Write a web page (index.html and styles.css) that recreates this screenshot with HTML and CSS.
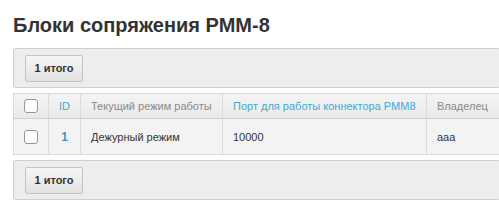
FILE: index.html
```html
<!DOCTYPE html>
<html>
<head>
<meta charset="utf-8">
<link rel="stylesheet" href="styles.css">
</head>
<body>
<div class="page">
  <h1 class="title">Блоки сопряжения РММ-8</h1>
  <div class="toolbar"><span class="btn">1 итого</span></div>
  <table class="grid">
    <colgroup>
      <col class="c-check"><col class="c-id"><col class="c-mode"><col class="c-port"><col class="c-owner">
    </colgroup>
    <thead>
      <tr>
        <th class="cell-check"><span class="checkbox"></span></th>
        <th class="link center">ID</th>
        <th>Текущий режим работы</th>
        <th class="link">Порт для работы коннектора РММ8</th>
        <th>Владелец</th>
      </tr>
    </thead>
    <tbody>
      <tr>
        <td class="cell-check"><span class="checkbox"></span></td>
        <td class="id center">1</td>
        <td>Дежурный режим</td>
        <td>10000</td>
        <td>aaa</td>
      </tr>
    </tbody>
  </table>
  <div class="toolbar"><span class="btn">1 итого</span></div>
</div>
</body>
</html>
```

FILE: styles.css
```css
html, body {
  margin: 0;
  padding: 0;
  background: #fff;
}
body {
  font-family: "Liberation Sans", Arial, sans-serif;
  color: #333;
  overflow: hidden;
}
.page {
  padding: 0 0 0 13px;
  width: 488px;
}
.title {
  margin: 0;
  padding-top: 14px;
  height: 48px;
  box-sizing: border-box;
  font-size: 20px;
  line-height: 23px;
  font-weight: bold;
  color: #333;
}
.toolbar {
  box-sizing: border-box;
  height: 40px;
  border: 1px solid #cfcfcf;
  border-radius: 3px;
  background: #ededed;
  padding: 6px 0 0 11px;
}
.btn {
  display: inline-block;
  box-sizing: border-box;
  width: 58px;
  height: 27px;
  line-height: 25px;
  text-align: center;
  border: 1px solid #c4c4c4;
  border-radius: 2px;
  background: linear-gradient(#f6f6f6, #e2e2e2);
  font-size: 11px;
  font-weight: bold;
  color: #333;
}
.grid {
  margin: 5px 0;
  width: 486px;
  border-collapse: collapse;
  table-layout: fixed;
  font-size: 11px;
  border: 1px solid #d2d2d2;
}
.c-check { width: 35px; }
.c-id { width: 32px; }
.c-mode { width: 142px; }
.c-port { width: 204px; }
.c-owner { width: 73px; }
.grid th, .grid td {
  border: 1px solid #dcdcdc;
  text-align: left;
  padding: 0 0 0 10px;
  white-space: nowrap;
  overflow: hidden;
}
.grid th {
  height: 24px;
  font-weight: normal;
  color: #8a8a8a;
  background: linear-gradient(#f4f4f4, #e9e9e9);
  border-bottom-color: #d2d2d2;
}
.grid td {
  height: 35px;
  background: #f3f3f3;
  color: #333;
}
.grid th.link {
  color: #45a9cf;
}
.grid .center {
  text-align: center;
  padding: 0;
}
.grid td.id {
  color: #3a9ac4;
  font-weight: bold;
  font-size: 12px;
}
.grid .cell-check {
  padding: 0;
  text-align: center;
}
.checkbox {
  display: inline-block;
  box-sizing: border-box;
  width: 14px;
  height: 14px;
  border: 1px solid #99959f;
  border-radius: 3px;
  background: #fff;
  vertical-align: middle;
}
```
